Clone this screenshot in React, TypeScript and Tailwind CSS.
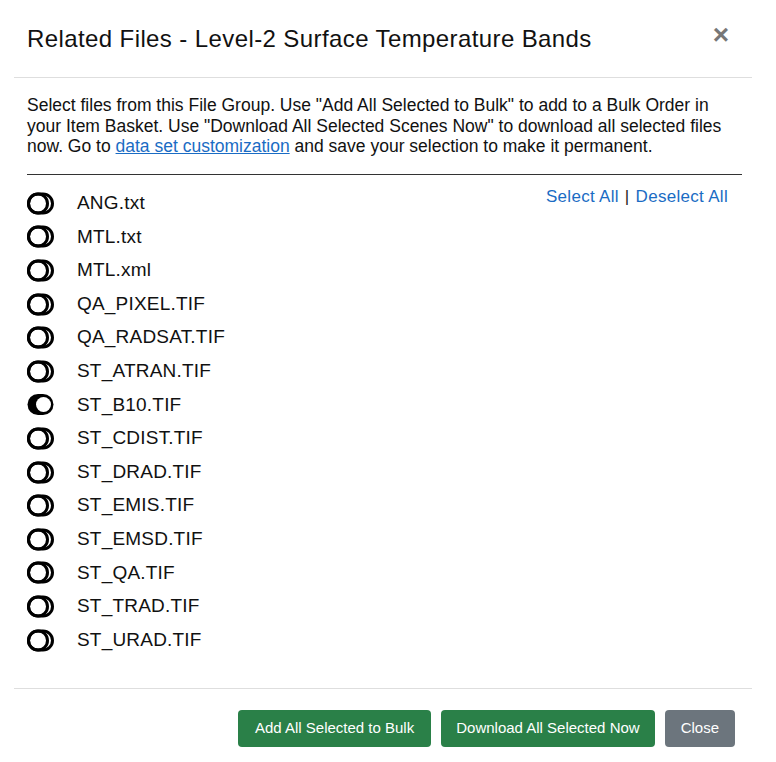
import { useState } from "react";

const files = [
  "ANG.txt",
  "MTL.txt",
  "MTL.xml",
  "QA_PIXEL.TIF",
  "QA_RADSAT.TIF",
  "ST_ATRAN.TIF",
  "ST_B10.TIF",
  "ST_CDIST.TIF",
  "ST_DRAD.TIF",
  "ST_EMIS.TIF",
  "ST_EMSD.TIF",
  "ST_QA.TIF",
  "ST_TRAD.TIF",
  "ST_URAD.TIF",
];

function Toggle({ on }: { on: boolean }) {
  if (on) {
    return (
      <svg width="27" height="23" viewBox="0 0 27 23">
        <rect x="0.5" y="1" width="26" height="21" rx="10.5" fill="#000" />
        <circle cx="16.5" cy="11.5" r="7.5" fill="#fff" />
      </svg>
    );
  }
  return (
    <svg width="27" height="23" viewBox="0 0 27 23" fill="none" stroke="#000" strokeWidth="3">
      <rect x="1.5" y="2" width="24" height="19" rx="9.5" />
      <circle cx="11" cy="11.5" r="9.5" />
    </svg>
  );
}

export default function App() {
  const [selected, setSelected] = useState<string[]>(["ST_B10.TIF"]);

  const toggle = (f: string) =>
    setSelected((s) => (s.includes(f) ? s.filter((x) => x !== f) : [...s, f]));

  return (
    <div className="w-[776px] h-[762px] bg-white pl-[14px] pr-[24px] font-['Liberation_Sans',Arial,sans-serif] text-[#111]">
      <div className="h-[78px] flex items-center justify-between pl-[13px] pr-[23px] border-b border-[#dedede]">
        <h1 className="text-[24px] tracking-[0.4px] leading-none pt-[1px]">
          Related Files - Level-2 Surface Temperature Bands
        </h1>
        <button className="text-[#777] text-[28px] font-bold leading-none -mt-[8px]">
          ×
        </button>
      </div>

      <div className="pl-[13px] pr-[10px] pt-[17px] h-[610px]">
        <p className="text-[17.5px] leading-[20.5px]">
          Select files from this File Group. Use "Add All Selected to Bulk" to
          add to a Bulk Order in your Item Basket. Use "Download All Selected
          Scenes Now" to download all selected files now. Go to{" "}
          <a href="#" className="text-[#1a6cc4] underline">
            data set customization
          </a>{" "}
          and save your selection to make it permanent.
        </p>
        <hr className="mt-[17px] border-t border-[#333]" />
        <div className="pt-[12px]">
          <div className="float-right pr-[14px] text-[17px] tracking-[0.3px] leading-[20px] text-[#1a6cc4]">
            <a href="#" onClick={() => setSelected([...files])}>
              Select All
            </a>
            <span className="text-[#222] mx-[6px]">|</span>
            <a href="#" onClick={() => setSelected([])}>
              Deselect All
            </a>
          </div>
          {files.map((f) => (
            <div
              key={f}
              className="h-[33.6px] flex items-center gap-[23px] cursor-pointer"
              onClick={() => toggle(f)}
            >
              <Toggle on={selected.includes(f)} />
              <span className="text-[19px] tracking-[0.2px]">{f}</span>
            </div>
          ))}
        </div>
      </div>

      <div className="border-t border-[#dedede] flex justify-end gap-[10px] pt-[21px] pr-[17px]">
        <button className="h-[37px] px-[17px] rounded-[4px] bg-[#2a8048] text-white text-[15px]">
          Add All Selected to Bulk
        </button>
        <button className="h-[37px] px-[15px] rounded-[4px] bg-[#2a8048] text-white text-[15px]">
          Download All Selected Now
        </button>
        <button className="h-[37px] px-[16px] rounded-[4px] bg-[#6c757d] text-white text-[15px]">
          Close
        </button>
      </div>
    </div>
  );
}
